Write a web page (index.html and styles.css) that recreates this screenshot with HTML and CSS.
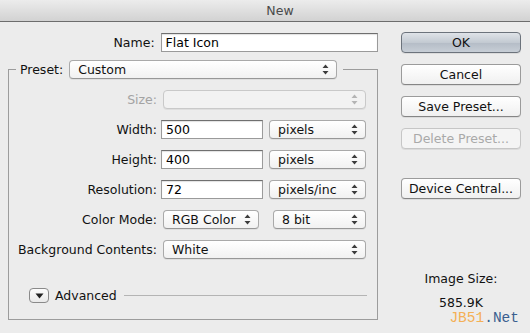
FILE: index.html
```html
<!DOCTYPE html>
<html lang="en">
<head>
<meta charset="UTF-8">
<title>New</title>
<link rel="stylesheet" href="styles.css">
</head>
<body>
<div class="titlebar">New</div>
<div class="dialog">
    <div class="form">
        <div class="name-row">
            <label class="label">Name:</label>
            <input type="text" class="field name-field" value="Flat Icon">
        </div>
        <fieldset class="preset">
            <legend>
                <label class="legend-label">Preset:</label>
                <div class="popup preset-popup"><span>Custom</span><svg class="arrows" width="7" height="11" viewBox="0 0 7 11"><path d="M3.5 0.5 L6.5 4 L0.5 4 Z M3.5 10.5 L6.5 7 L0.5 7 Z"/></svg></div>
            </legend>
            <div class="rows">
                <label class="label disabled">Size:</label>
                <div class="popup popup-full off"><span></span><svg class="arrows" width="7" height="11" viewBox="0 0 7 11"><path d="M3.5 0.5 L6.5 4 L0.5 4 Z M3.5 10.5 L6.5 7 L0.5 7 Z"/></svg></div>

                <label class="label">Width:</label>
                <div class="pair">
                    <input type="text" class="field num-field" value="500">
                    <div class="popup unit-popup"><span>pixels</span><svg class="arrows" width="7" height="11" viewBox="0 0 7 11"><path d="M3.5 0.5 L6.5 4 L0.5 4 Z M3.5 10.5 L6.5 7 L0.5 7 Z"/></svg></div>
                </div>

                <label class="label">Height:</label>
                <div class="pair">
                    <input type="text" class="field num-field" value="400">
                    <div class="popup unit-popup"><span>pixels</span><svg class="arrows" width="7" height="11" viewBox="0 0 7 11"><path d="M3.5 0.5 L6.5 4 L0.5 4 Z M3.5 10.5 L6.5 7 L0.5 7 Z"/></svg></div>
                </div>

                <label class="label">Resolution:</label>
                <div class="pair">
                    <input type="text" class="field num-field" value="72">
                    <div class="popup unit-popup"><span>pixels/inc</span><svg class="arrows" width="7" height="11" viewBox="0 0 7 11"><path d="M3.5 0.5 L6.5 4 L0.5 4 Z M3.5 10.5 L6.5 7 L0.5 7 Z"/></svg></div>
                </div>

                <label class="label">Color Mode:</label>
                <div class="pair">
                    <div class="popup mode-popup"><span>RGB Color</span><svg class="arrows" width="7" height="11" viewBox="0 0 7 11"><path d="M3.5 0.5 L6.5 4 L0.5 4 Z M3.5 10.5 L6.5 7 L0.5 7 Z"/></svg></div>
                    <div class="popup bit-popup"><span>8 bit</span><svg class="arrows" width="7" height="11" viewBox="0 0 7 11"><path d="M3.5 0.5 L6.5 4 L0.5 4 Z M3.5 10.5 L6.5 7 L0.5 7 Z"/></svg></div>
                </div>

                <label class="label">Background Contents:</label>
                <div class="popup popup-full"><span>White</span><svg class="arrows" width="7" height="11" viewBox="0 0 7 11"><path d="M3.5 0.5 L6.5 4 L0.5 4 Z M3.5 10.5 L6.5 7 L0.5 7 Z"/></svg></div>
            </div>
            <div class="advanced">
                <div class="disclosure"><svg width="9" height="6" viewBox="0 0 9 6"><path d="M0.5 0.5 L8.5 0.5 L4.5 5.5 Z"/></svg></div>
                <span>Advanced</span>
                <div class="rule"></div>
            </div>
        </fieldset>
    </div>
    <div class="side">
        <button class="btn default">OK</button>
        <button class="btn">Cancel</button>
        <button class="btn">Save Preset...</button>
        <button class="btn off">Delete Preset...</button>
        <button class="btn central">Device Central...</button>
        <div class="image-size">
            <div>Image Size:</div>
            <div class="size-value">585.9K</div>
        </div>
        <div class="mark"><span class="mark-a">JB51</span><span class="mark-b">.Net</span></div>
    </div>
</div>
</body>
</html>
```
FILE: styles.css
```css
body {
    margin: 0;
    background: #ececec;
    font-family: "DejaVu Sans", sans-serif;
    font-size: 12.5px;
    color: #111;
    width: 530px;
    height: 333px;
    overflow: hidden;
}
.titlebar {
    height: 21px;
    line-height: 21px;
    text-align: center;
    padding-left: 30px;
    color: #4a4a4a;
    font-size: 12.5px;
    background: linear-gradient(#ececec, #d2d2d2);
    border-bottom: 1px solid #6d6d6d;
}
.dialog {
    display: flex;
    padding: 0 0 0 8px;
}
.form {
    width: 370px;
}
.name-row {
    display: flex;
    align-items: center;
    margin-top: 11px;
}
.label {
    text-align: right;
    white-space: nowrap;
}
.name-row .label {
    width: 147px;
    margin-right: 6px;
}
.disabled {
    color: #a3a3a3;
}
.field {
    box-sizing: border-box;
    height: 19px;
    margin: 0;
    padding: 0 0 0 4px;
    font-family: inherit;
    font-size: 12.5px;
    color: #000;
    background: #fff;
    border: 1px solid #9a9a9a;
    border-top-color: #6f6f6f;
    box-shadow: inset 0 1px 1px rgba(0, 0, 0, 0.12);
    outline: none;
}
.name-field {
    width: 218px;
}
.num-field {
    width: 102px;
}
.preset {
    margin: 8px 0 0 0;
    padding: 0;
    width: 370px;
    height: 260px;
    box-sizing: border-box;
    border: 1px solid #9c9c9c;
}
.preset legend {
    display: flex;
    align-items: center;
    margin-left: 7px;
    padding: 0 6px 0 4px;
}
.legend-label {
    margin-right: 6px;
}
.popup {
    box-sizing: border-box;
    display: flex;
    align-items: center;
    justify-content: space-between;
    height: 19px;
    padding: 0 7px 0 8px;
    font-size: 12.5px;
    background: linear-gradient(#ffffff, #f1f1f1);
    border: 1px solid #a9a9a9;
    border-bottom-color: #979797;
    border-radius: 4px;
    box-shadow: 0 1px 0 rgba(0, 0, 0, 0.06);
}
.arrows {
    fill: #3c3c3c;
}
.popup.off {
    background: #f2f2f2;
    border-color: #c9c9c9;
}
.popup.off .arrows {
    fill: #b4b4b4;
}
.preset-popup {
    width: 268px;
}
.rows {
    display: grid;
    grid-template-columns: 148px 1fr;
    grid-auto-rows: 30px;
    align-items: center;
    column-gap: 4px;
    padding-top: 5px;
}
.popup-full {
    width: 203px;
    margin-left: 2px;
}
.pair {
    display: flex;
    align-items: center;
}
.unit-popup {
    width: 97px;
    margin-left: 6px;
}
.mode-popup {
    width: 96px;
    margin-left: 2px;
}
.bit-popup {
    width: 93px;
    margin-left: 14px;
}
.advanced {
    display: flex;
    align-items: center;
    margin: 24px 0 0 20px;
}
.disclosure {
    box-sizing: border-box;
    width: 20px;
    height: 15px;
    display: flex;
    align-items: center;
    justify-content: center;
    background: linear-gradient(#fdfdfd, #e9e9e9);
    border: 1px solid #8a8a8a;
    border-radius: 4px;
    margin-right: 6px;
}
.disclosure svg {
    fill: #222;
}
.rule {
    width: 243px;
    height: 1px;
    background: #b4b4b4;
    margin-left: 7px;
}
.side {
    display: flex;
    flex-direction: column;
    align-items: center;
    width: 120px;
    margin: 10px 0 0 23px;
}
.btn {
    box-sizing: border-box;
    width: 120px;
    height: 21px;
    margin: 0 0 11px 0;
    padding: 0;
    font-family: inherit;
    font-size: 12.5px;
    color: #111;
    background: linear-gradient(#ffffff, #f0f0f0);
    border: 1px solid #9b9b9b;
    border-bottom-color: #858585;
    border-radius: 4px;
    box-shadow: 0 1px 0 rgba(0, 0, 0, 0.07);
}
.btn.default {
    background: linear-gradient(#dfe3e8, #c3cad2 50%, #b4bcc6 51%, #c7ced6);
    border-color: #6c737c;
}
.btn.off {
    color: #a9a9a9;
    border-color: #c6c6c6;
    background: #f4f4f4;
}
.btn.central {
    margin-top: 18px;
}
.image-size {
    margin-top: 57px;
    text-align: center;
    line-height: 24px;
}
.mark {
    align-self: flex-end;
    margin: -4px 2px 0 0;
    font-family: "Liberation Mono", monospace;
    font-size: 14.5px;
    line-height: 14px;
}
.mark-a {
    color: #f4b056;
}
.mark-b {
    color: #3a5f8f;
}
```
